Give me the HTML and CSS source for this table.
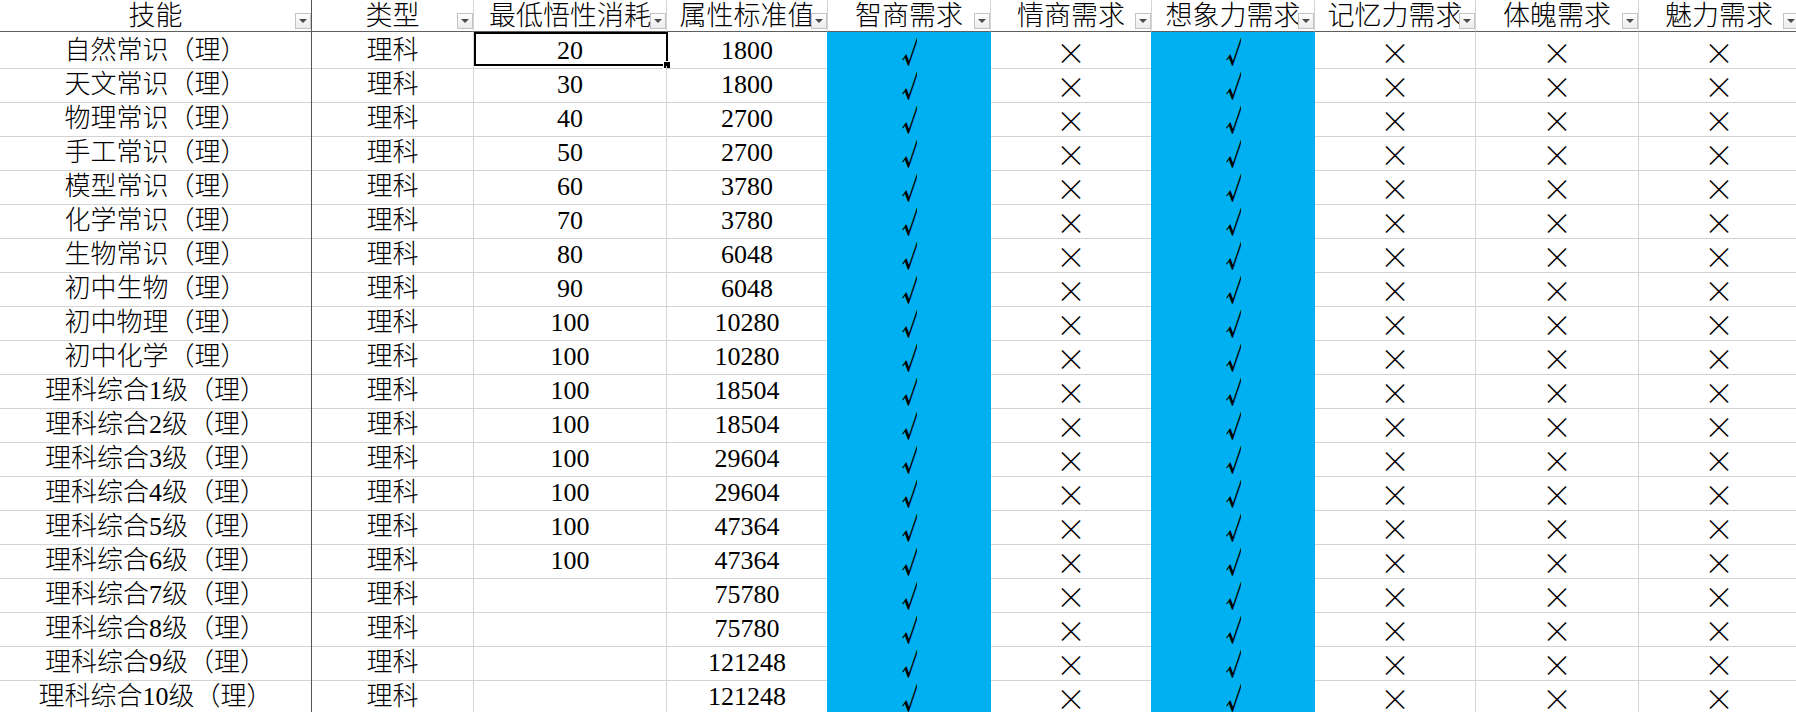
FILE: index.html
```html
<!DOCTYPE html>
<html lang="zh-CN">
<head>
<meta charset="utf-8">
<title>技能表</title>
<link rel="stylesheet" href="styles.css">
</head>
<body>
<div class="sheet">
  <div class="row head">
    <div class="c">技能<span class="flt"></span></div>
    <div class="c">类型<span class="flt"></span></div>
    <div class="c">最低悟性消耗<span class="flt"></span></div>
    <div class="c">属性标准值<span class="flt"></span></div>
    <div class="c">智商需求<span class="flt"></span></div>
    <div class="c">情商需求<span class="flt"></span></div>
    <div class="c">想象力需求<span class="flt"></span></div>
    <div class="c">记忆力需求<span class="flt"></span></div>
    <div class="c">体魄需求<span class="flt"></span></div>
    <div class="c">魅力需求<span class="flt"></span></div>
  </div>
  <div class="row"><div class="c">自然常识（理）</div><div class="c">理科</div><div class="c sel">20</div><div class="c">1800</div><div class="c ok"><span class="chk">√</span></div><div class="c no">×</div><div class="c ok"><span class="chk">√</span></div><div class="c no">×</div><div class="c no">×</div><div class="c no">×</div></div>
  <div class="row"><div class="c">天文常识（理）</div><div class="c">理科</div><div class="c">30</div><div class="c">1800</div><div class="c ok"><span class="chk">√</span></div><div class="c no">×</div><div class="c ok"><span class="chk">√</span></div><div class="c no">×</div><div class="c no">×</div><div class="c no">×</div></div>
  <div class="row"><div class="c">物理常识（理）</div><div class="c">理科</div><div class="c">40</div><div class="c">2700</div><div class="c ok"><span class="chk">√</span></div><div class="c no">×</div><div class="c ok"><span class="chk">√</span></div><div class="c no">×</div><div class="c no">×</div><div class="c no">×</div></div>
  <div class="row"><div class="c">手工常识（理）</div><div class="c">理科</div><div class="c">50</div><div class="c">2700</div><div class="c ok"><span class="chk">√</span></div><div class="c no">×</div><div class="c ok"><span class="chk">√</span></div><div class="c no">×</div><div class="c no">×</div><div class="c no">×</div></div>
  <div class="row"><div class="c">模型常识（理）</div><div class="c">理科</div><div class="c">60</div><div class="c">3780</div><div class="c ok"><span class="chk">√</span></div><div class="c no">×</div><div class="c ok"><span class="chk">√</span></div><div class="c no">×</div><div class="c no">×</div><div class="c no">×</div></div>
  <div class="row"><div class="c">化学常识（理）</div><div class="c">理科</div><div class="c">70</div><div class="c">3780</div><div class="c ok"><span class="chk">√</span></div><div class="c no">×</div><div class="c ok"><span class="chk">√</span></div><div class="c no">×</div><div class="c no">×</div><div class="c no">×</div></div>
  <div class="row"><div class="c">生物常识（理）</div><div class="c">理科</div><div class="c">80</div><div class="c">6048</div><div class="c ok"><span class="chk">√</span></div><div class="c no">×</div><div class="c ok"><span class="chk">√</span></div><div class="c no">×</div><div class="c no">×</div><div class="c no">×</div></div>
  <div class="row"><div class="c">初中生物（理）</div><div class="c">理科</div><div class="c">90</div><div class="c">6048</div><div class="c ok"><span class="chk">√</span></div><div class="c no">×</div><div class="c ok"><span class="chk">√</span></div><div class="c no">×</div><div class="c no">×</div><div class="c no">×</div></div>
  <div class="row"><div class="c">初中物理（理）</div><div class="c">理科</div><div class="c">100</div><div class="c">10280</div><div class="c ok"><span class="chk">√</span></div><div class="c no">×</div><div class="c ok"><span class="chk">√</span></div><div class="c no">×</div><div class="c no">×</div><div class="c no">×</div></div>
  <div class="row"><div class="c">初中化学（理）</div><div class="c">理科</div><div class="c">100</div><div class="c">10280</div><div class="c ok"><span class="chk">√</span></div><div class="c no">×</div><div class="c ok"><span class="chk">√</span></div><div class="c no">×</div><div class="c no">×</div><div class="c no">×</div></div>
  <div class="row"><div class="c">理科综合1级（理）</div><div class="c">理科</div><div class="c">100</div><div class="c">18504</div><div class="c ok"><span class="chk">√</span></div><div class="c no">×</div><div class="c ok"><span class="chk">√</span></div><div class="c no">×</div><div class="c no">×</div><div class="c no">×</div></div>
  <div class="row"><div class="c">理科综合2级（理）</div><div class="c">理科</div><div class="c">100</div><div class="c">18504</div><div class="c ok"><span class="chk">√</span></div><div class="c no">×</div><div class="c ok"><span class="chk">√</span></div><div class="c no">×</div><div class="c no">×</div><div class="c no">×</div></div>
  <div class="row"><div class="c">理科综合3级（理）</div><div class="c">理科</div><div class="c">100</div><div class="c">29604</div><div class="c ok"><span class="chk">√</span></div><div class="c no">×</div><div class="c ok"><span class="chk">√</span></div><div class="c no">×</div><div class="c no">×</div><div class="c no">×</div></div>
  <div class="row"><div class="c">理科综合4级（理）</div><div class="c">理科</div><div class="c">100</div><div class="c">29604</div><div class="c ok"><span class="chk">√</span></div><div class="c no">×</div><div class="c ok"><span class="chk">√</span></div><div class="c no">×</div><div class="c no">×</div><div class="c no">×</div></div>
  <div class="row"><div class="c">理科综合5级（理）</div><div class="c">理科</div><div class="c">100</div><div class="c">47364</div><div class="c ok"><span class="chk">√</span></div><div class="c no">×</div><div class="c ok"><span class="chk">√</span></div><div class="c no">×</div><div class="c no">×</div><div class="c no">×</div></div>
  <div class="row"><div class="c">理科综合6级（理）</div><div class="c">理科</div><div class="c">100</div><div class="c">47364</div><div class="c ok"><span class="chk">√</span></div><div class="c no">×</div><div class="c ok"><span class="chk">√</span></div><div class="c no">×</div><div class="c no">×</div><div class="c no">×</div></div>
  <div class="row"><div class="c">理科综合7级（理）</div><div class="c">理科</div><div class="c"></div><div class="c">75780</div><div class="c ok"><span class="chk">√</span></div><div class="c no">×</div><div class="c ok"><span class="chk">√</span></div><div class="c no">×</div><div class="c no">×</div><div class="c no">×</div></div>
  <div class="row"><div class="c">理科综合8级（理）</div><div class="c">理科</div><div class="c"></div><div class="c">75780</div><div class="c ok"><span class="chk">√</span></div><div class="c no">×</div><div class="c ok"><span class="chk">√</span></div><div class="c no">×</div><div class="c no">×</div><div class="c no">×</div></div>
  <div class="row"><div class="c">理科综合9级（理）</div><div class="c">理科</div><div class="c"></div><div class="c">121248</div><div class="c ok"><span class="chk">√</span></div><div class="c no">×</div><div class="c ok"><span class="chk">√</span></div><div class="c no">×</div><div class="c no">×</div><div class="c no">×</div></div>
  <div class="row last"><div class="c">理科综合10级（理）</div><div class="c">理科</div><div class="c"></div><div class="c">121248</div><div class="c ok"><span class="chk">√</span></div><div class="c no">×</div><div class="c ok"><span class="chk">√</span></div><div class="c no">×</div><div class="c no mark">×</div><div class="c no">×</div></div>
</div>
</body>
</html>
```
FILE: styles.css
```css
html, body {
  margin: 0;
  padding: 0;
  background: #fff;
  overflow: hidden;
}

.sheet {
  width: 1800px;
  font-family: "Liberation Serif", "Noto Sans CJK SC", serif;
  font-weight: 300;
  color: #000;
  text-spacing-trim: space-all;
  font-feature-settings: "chws" 0, "halt" 0, "palt" 0;
}

.row {
  display: grid;
  grid-template-columns: 312px 162px 193px 161px 163px 161px 163px 161px 163px 161px;
  height: 34px;
}

.c {
  position: relative;
  box-sizing: border-box;
  height: 100%;
  padding-top: 2px;
  border-right: 1px solid #d4d4d4;
  border-bottom: 1px solid #d4d4d4;
  text-align: center;
  font-size: 26px;
  line-height: 34px;
  white-space: nowrap;
  overflow: visible;
}

.c:first-child {
  border-right-color: #555;
}

.row:not(.head) .c:first-child {
  font-family: "Liberation Serif", "Noto Sans CJK TC", serif;
}

.head {
  height: 32px;
}

.head .c {
  padding-top: 0;
  font-size: 27px;
  line-height: 32px;
  border-bottom-color: #5f5f5f;
  overflow: hidden;
}

.row:not(.head) .c:nth-child(4),
.row:not(.head) .c:nth-child(6) {
  border-right-color: #00b0f0;
}

.ok {
  background: #00b0f0;
  border-color: #00b0f0;
}

.chk {
  display: inline-block;
  width: 15px;
  overflow: hidden;
  vertical-align: top;
  font-family: "Noto Sans CJK SC", sans-serif;
  font-weight: 700;
  font-size: 28px;
  line-height: 34px;
  text-align: left;
}

.no {
  font-family: "Noto Sans CJK SC", sans-serif;
  font-weight: 300;
  font-size: 30px;
}

.flt {
  position: absolute;
  right: 0;
  bottom: 2px;
  width: 16px;
  height: 16px;
  box-sizing: border-box;
  border: 1px solid #c3c3c3;
  background: linear-gradient(#ffffff, #ebebeb);
}

.flt::after {
  content: "";
  position: absolute;
  left: 3px;
  top: 5px;
  border-left: 4px solid transparent;
  border-right: 4px solid transparent;
  border-top: 4px solid #4a4a4a;
}

.sel::before {
  content: "";
  position: absolute;
  left: 0;
  top: 0;
  width: 194px;
  height: 34px;
  box-sizing: border-box;
  border: 2px solid #000;
}

.sel::after {
  content: "";
  position: absolute;
  left: 190px;
  top: 30px;
  width: 6px;
  height: 6px;
  background: #000;
  box-shadow: 0 0 0 1px #fff;
}

.mark {
  box-shadow: inset 0 -2px 0 #1ea4e0;
}
```
